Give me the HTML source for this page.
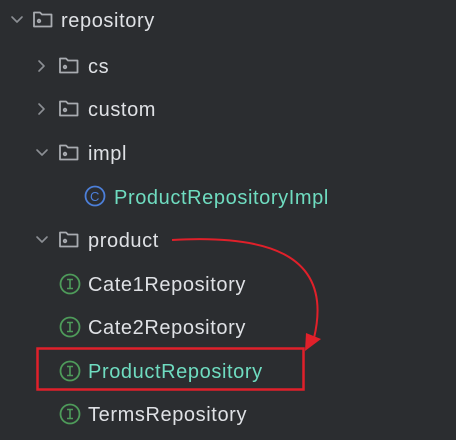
<!DOCTYPE html><html><head><style>
body{margin:0;width:456px;height:440px;background:#2b2d30;position:relative;overflow:hidden;font-family:"Liberation Sans",sans-serif;font-size:20px;letter-spacing:0.6px;color:#dfe1e5}
.t{position:absolute;line-height:22px;white-space:nowrap}
.g{color:#6fdcc0}
svg{position:absolute;left:0;top:0}
</style></head><body>
<svg width="456" height="440" fill="none">
<g stroke="#8c8f94" stroke-width="1.6" stroke-linecap="round" stroke-linejoin="round">
<path d="M12 17l5 5 5-5"/><path d="M39 61l5 5-5 5"/><path d="M39 104l5 5-5 5"/><path d="M37 150l5 5 5-5"/><path d="M37 237l5 5 5-5"/>
</g>
<g stroke="#a9acb1" stroke-width="1.8" stroke-linejoin="round">
<path d="M34 12.5h6l2 2h9.5v12h-17.5z"/><circle cx="39" cy="21" r="1.3"/>
<path d="M60 58.5h6l2 2h9.5v12h-17.5z"/><circle cx="65" cy="67" r="1.3"/>
<path d="M60 101.5h6l2 2h9.5v12h-17.5z"/><circle cx="65" cy="110" r="1.3"/>
<path d="M60 145.5h6l2 2h9.5v12h-17.5z"/><circle cx="65" cy="154" r="1.3"/>
<path d="M60 232.5h6l2 2h9.5v12h-17.5z"/><circle cx="65" cy="241" r="1.3"/>
</g>
<circle cx="95" cy="196" r="9.5" stroke="#4c7fd9" stroke-width="1.8"/>
<text x="95" y="201" font-family="Liberation Sans" font-size="13" fill="#4c7fd9" text-anchor="middle">C</text>
<g stroke="#4e9b5a" stroke-width="1.8">
<circle cx="70" cy="284" r="9.5"/><circle cx="70" cy="327" r="9.5"/><circle cx="70" cy="371" r="9.5"/><circle cx="70" cy="414" r="9.5"/>
</g>
<g stroke="#4e9b5a" stroke-width="1.6">
<path d="M67 279.5h6M70 279.5v9M67 288.5h6"/><path d="M67 322.5h6M70 322.5v9M67 331.5h6"/><path d="M67 366.5h6M70 366.5v9M67 375.5h6"/><path d="M67 409.5h6M70 409.5v9M67 418.5h6"/>
</g>
<rect x="37.5" y="348.5" width="266" height="41" stroke="#e0202a" stroke-width="2.5"/>
<path d="M172 240C260 235 335 250 314 338" stroke="#e0202a" stroke-width="2"/>
<path d="M305 351L306 333L321 339Z" fill="#e0202a"/>
</svg>
<div class="t" style="left:61px;top:10px">repository</div>
<div class="t" style="left:88px;top:56px">cs</div>
<div class="t" style="left:88px;top:99px">custom</div>
<div class="t" style="left:88px;top:143px">impl</div>
<div class="t g" style="left:114px;top:187px">ProductRepositoryImpl</div>
<div class="t" style="left:88px;top:230px">product</div>
<div class="t" style="left:88px;top:274px">Cate1Repository</div>
<div class="t" style="left:88px;top:317px">Cate2Repository</div>
<div class="t g" style="left:88px;top:361px">ProductRepository</div>
<div class="t" style="left:88px;top:404px">TermsRepository</div>
</body></html>
